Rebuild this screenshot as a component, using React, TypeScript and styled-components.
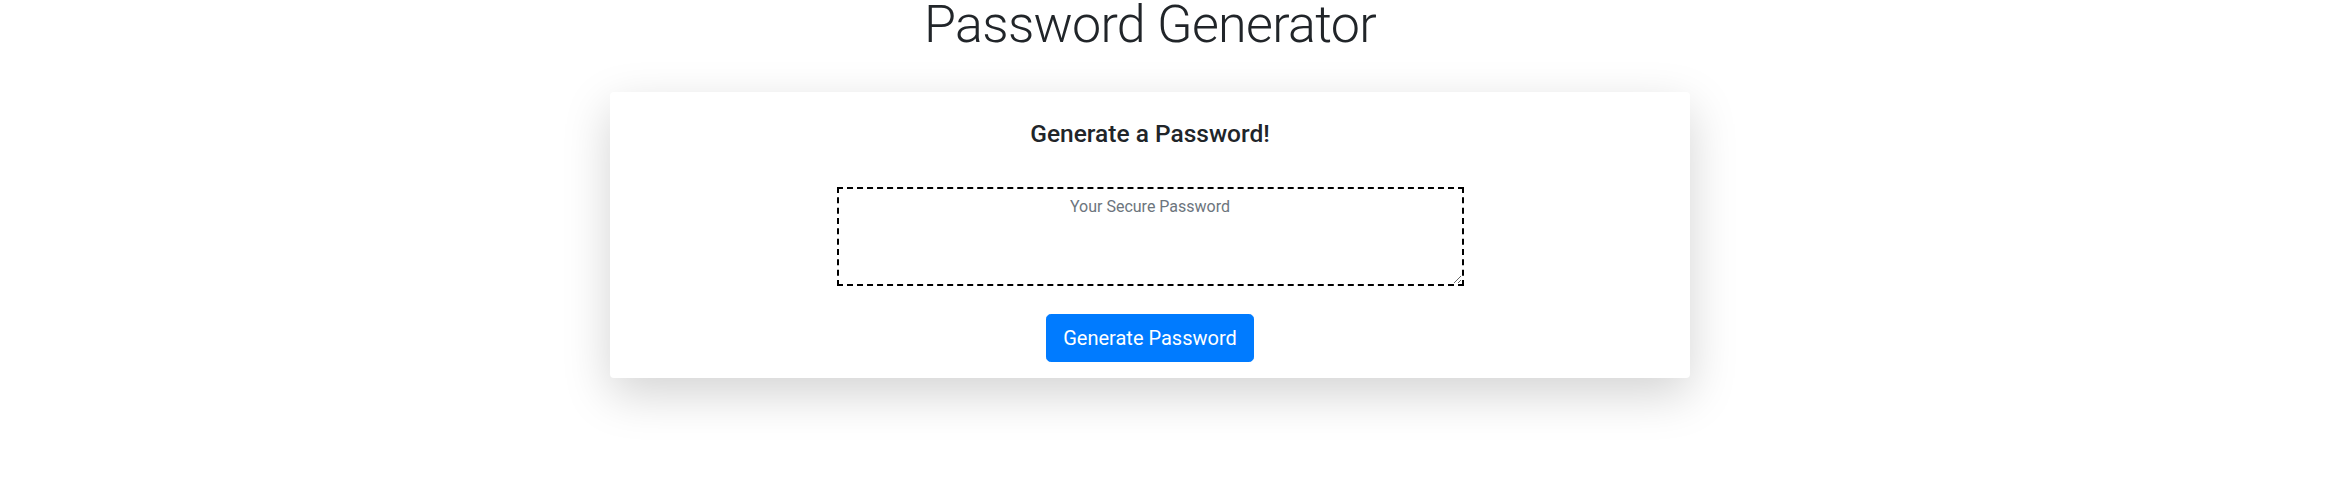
import React from "react";
import styled, { createGlobalStyle } from "styled-components";

const GlobalStyle = createGlobalStyle`
  *, *::before, *::after { box-sizing: border-box; }
  html, body { background: #ffffff; }
  body {
    margin: 0;
    font-family: Roboto, "Liberation Sans", Arial, sans-serif;
    color: #212529;
  }
`;

const Page = styled.div`
  width: 2300px;
  min-height: 499px;
  padding-bottom: 100px;
  display: flex;
  flex-direction: column;
  align-items: center;
`;

const Title = styled.h1`
  margin: 0;
  padding-top: 1px;
  font-size: 52px;
  line-height: 47px;
  font-weight: 300;
  letter-spacing: -0.7px;
  color: #212529;
  text-align: center;
`;

const Card = styled.section`
  margin-top: 44px;
  width: 1080px;
  background: #ffffff;
  border-radius: 4px;
  box-shadow: 0 16px 48px rgba(0, 0, 0, 0.175);
  padding: 27px 20px 16px;
  display: flex;
  flex-direction: column;
  align-items: center;
`;

const CardTitle = styled.h2`
  margin: 0;
  font-size: 24.5px;
  line-height: 29px;
  font-weight: 500;
  color: #212529;
`;

const PasswordBox = styled.textarea`
  margin-top: 39px;
  width: 627px;
  height: 99px;
  border: 2px dashed #000000;
  border-radius: 0;
  padding: 6px 12px;
  font-family: Roboto, "Liberation Sans", Arial, sans-serif;
  font-size: 16px;
  line-height: 1.5;
  text-align: center;
  color: #495057;
  background: #ffffff;
  outline: none;

  &::placeholder {
    color: #6c757d;
    opacity: 1;
  }
`;

const GenerateButton = styled.button`
  margin-top: 28px;
  height: 48px;
  padding: 8px 16px;
  border: 1px solid #007bff;
  border-radius: 4.8px;
  background: #007bff;
  color: #ffffff;
  font-family: Roboto, "Liberation Sans", Arial, sans-serif;
  font-size: 20px;
  line-height: 1.5;
  font-weight: 400;
  cursor: pointer;
`;

export default function App() {
  return (
    <>
      <GlobalStyle />
      <Page>
        <Title>Password Generator</Title>
        <Card>
          <CardTitle>Generate a Password!</CardTitle>
          <PasswordBox readOnly placeholder="Your Secure Password" aria-label="Generated Password" />
          <GenerateButton type="button">Generate Password</GenerateButton>
        </Card>
      </Page>
    </>
  );
}
